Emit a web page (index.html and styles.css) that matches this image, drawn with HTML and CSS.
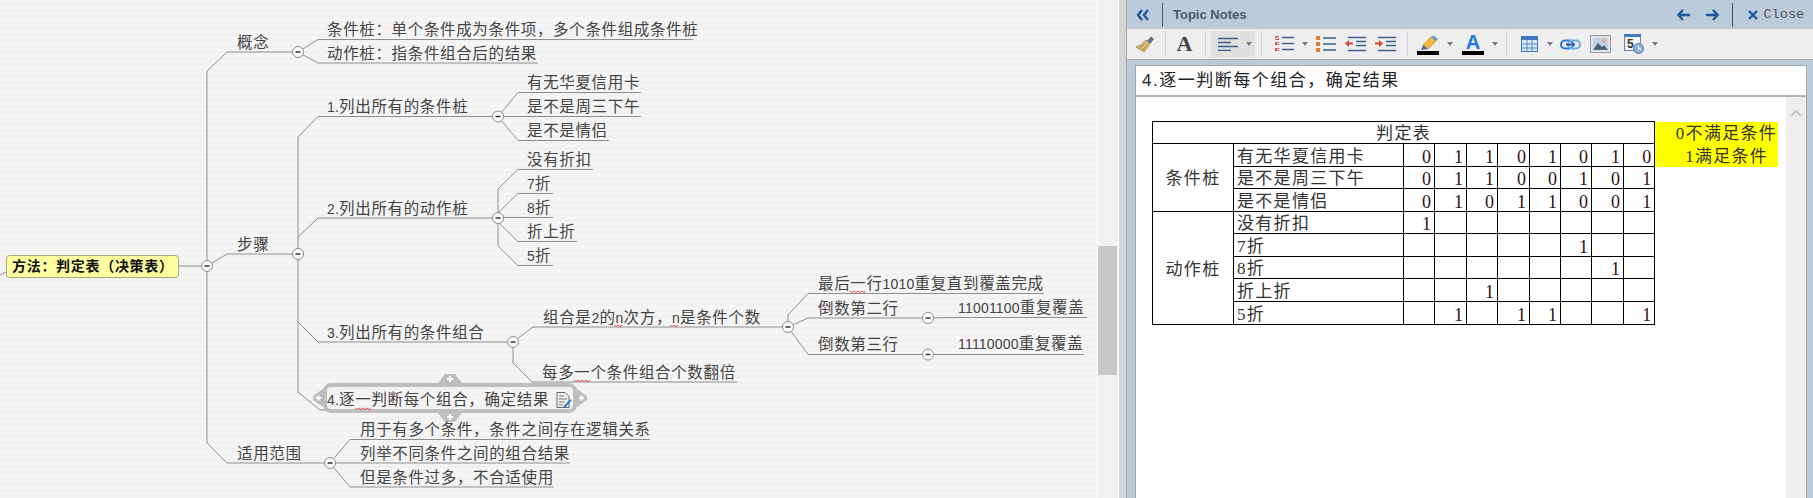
FILE: index.html
```html
<!DOCTYPE html>
<html lang="zh-CN">
<head>
  <meta charset="UTF-8">
  <title>Topic Notes</title>
  <link rel="stylesheet" href="styles.css">
</head>
<body>
  <div class="MainFrame">

    <div class="mapArea">
      <svg class="mapCanvas" width="1097" height="498" viewBox="0 0 1097 498">
        <!-- connecting lines -->
        <g class="links">
          <path d="M0 275L6 272M179 266H207M207 71V443"/>
          <path d="M207 71L227 52H298M298 52L318 39.5H693M298 52L318 63H538"/>
          <path d="M207 266L227 254H298M298 137V392"/>
          <path d="M298 137L318 116.5H498M498 116.5L518 92.5H641M498 116.5H641M498 116.5L518 140.5H609"/>
          <path d="M298 237L318 218H498M498 189V246M498 189L518 169.5H593M498 213L518 193.5H553M498 217.5H553M498 222L518 241.5H577M498 246L518 265.5H553"/>
          <path d="M298 322L318 342H513M513 342L533 327H788M513 342V363L532 382H737"/>
          <path d="M788 327V315L808 293.5H1044M788 327L808 318H928L957 317.5H1087M788 327L808 354.5H928H1084"/>
          <path d="M298 392L320 410H550"/>
          <path d="M207 443L227 463H330M330 463L350 439.5H650M330 463H570M330 463L350 487H554"/>
        </g>

        <!-- selected topic frame -->
        <g class="selectFrame">
          <rect class="selectBox" x="325" y="385" width="250" height="26" rx="6"/>
          <path class="selectHandle" d="M438 383L445 374H455L462 383Z"/>
          <path class="selectHandle" d="M438 413L445 422H455L462 413Z"/>
          <path class="selectHandle" d="M323 389L313 396V400L323 407Z"/>
          <path class="selectHandle" d="M577 389L587 396V400L577 407Z"/>
          <path class="handlePlus" d="M447 379H453M450 376V382M447 417H453M450 414V420M316 398H321M318.500 395.500V400.500M579 398H584M581.500 395.500V400.500"/>
        </g>

        <!-- collapse knobs -->
        <g class="knobs">
          <circle cx="207" cy="266" r="5.5"/>
          <circle cx="298" cy="52" r="5.5"/>
          <circle cx="298" cy="254" r="5.5"/>
          <circle cx="498" cy="116.5" r="5.5"/>
          <circle cx="498" cy="218" r="5.5"/>
          <circle cx="513" cy="342" r="5.5"/>
          <circle cx="788" cy="327" r="5.5"/>
          <circle cx="928" cy="318" r="5.5"/>
          <circle cx="928" cy="354.5" r="5.5"/>
          <circle cx="330" cy="463" r="5.5"/>
        </g>
        <path class="knobMinus" d="M204.500 266H209.500M295.500 52H300.500M295.500 254H300.500M495.500 116.500H500.500M495.500 218H500.500M510.500 342H515.500M785.500 327H790.500M925.500 318H930.500M925.500 354.500H930.500M327.500 463H332.500"/>

        <!-- root topic -->
        <rect class="rootBox" x="6.500" y="255.500" width="172" height="22" rx="3"/>
        <text class="rootText" x="12" y="271">方法：判定表（决策表）</text>

        <!-- topics -->
        <g class="topics">
          <text x="237" y="48">概念</text>
          <text x="327" y="35">条件桩：单个条件成为条件项，多个条件组成条件桩</text>
          <text x="327" y="59">动作桩：指条件组合后的结果</text>
          <text x="237" y="250">步骤</text>
          <text x="327" y="112"><tspan class="num">1.</tspan>列出所有的条件桩</text>
          <text x="527" y="88">有无华夏信用卡</text>
          <text x="527" y="112">是不是周三下午</text>
          <text x="527" y="136">是不是情侣</text>
          <text x="327" y="214"><tspan class="num">2.</tspan>列出所有的动作桩</text>
          <text x="527" y="165">没有折扣</text>
          <text x="527" y="189"><tspan class="num">7</tspan>折</text>
          <text x="527" y="213"><tspan class="num">8</tspan>折</text>
          <text x="527" y="237">折上折</text>
          <text x="527" y="261"><tspan class="num">5</tspan>折</text>
          <text x="327" y="338"><tspan class="num">3.</tspan>列出所有的条件组合</text>
          <text x="543" y="323">组合是<tspan class="num">2</tspan>的<tspan class="num">n</tspan>次方，<tspan class="num">n</tspan>是条件个数</text>
          <text x="542" y="378">每多一个条件组合个数翻倍</text>
          <text x="818" y="289">最后一行<tspan class="num">1010</tspan>重复直到覆盖完成</text>
          <text x="818" y="314">倒数第二行</text>
          <text x="958" y="313"><tspan class="num">11001100</tspan>重复覆盖</text>
          <text x="818" y="350">倒数第三行</text>
          <text x="958" y="349"><tspan class="num">11110000</tspan>重复覆盖</text>
          <text x="327" y="405"><tspan class="num">4.</tspan>逐一判断每个组合，确定结果</text>
          <text x="237" y="459">适用范围</text>
          <text x="360" y="435">用于有多个条件，条件之间存在逻辑关系</text>
          <text x="360" y="459">列举不同条件之间的组合结果</text>
          <text x="360" y="483">但是条件过多，不合适使用</text>
        </g>

        <!-- spell check marks -->
        <path class="squiggle" d="M355 408l2 1.500 2-1.500 2 1.500 2-1.500 2 1.500 2-1.500 2 1.500 2-1.500M574 380l2 1.500 2-1.500 2 1.500 2-1.500 2 1.500 2-1.500 2 1.500 2-1.500M850 291l2 1.500 2-1.500 2 1.500 2-1.500 2 1.500 2-1.500 2 1.500 2-1.500M614 325l2 1.500 2-1.500 2 1.500 2-1.500M670 325l2 1.500 2-1.500 2 1.500 2-1.500"/>

        <!-- note icon on selected topic -->
        <path class="noteIcon" d="M557 392.500H565L569 396.500V407.500H557Z"/>
        <path class="noteLines" d="M559 396H564M559 399H567M559 402H565M559 405H563"/>
        <path class="notePen" d="M564 407L571 400"/>
      </svg>
    </div>

    <div class="mapScroll"><div class="mapThumb"></div></div>
    <div class="splitter"></div>

    <div class="notesPanel">
      <div class="notesHead">
        <svg class="ico" width="14" height="12" viewBox="0 0 14 12"><path class="blueStroke" d="M6 1L2 6L6 11M12 1L8 6L12 11"/></svg>
        <span class="headSep"></span>
        <span class="headTitle">Topic Notes</span>
        <svg class="ico arrowLeft" width="14" height="12" viewBox="0 0 14 12"><path class="blueStroke" d="M6 1L1.500 6L6 11M2 6H13"/></svg>
        <svg class="ico arrowRight" width="14" height="12" viewBox="0 0 14 12"><path class="blueStroke" d="M8 1L12.500 6L8 11M1 6H12"/></svg>
        <span class="headSep sepRight"></span>
        <svg class="ico closeX" width="10" height="10" viewBox="0 0 10 10"><path class="blueStroke" d="M1 1L9 9M9 1L1 9"/></svg>
        <span class="closeText">Close</span>
      </div>

      <div class="toolBar">
        <svg class="ml8" width="20" height="18" viewBox="0 0 20 18">
          <path d="M12 6L16 1.500L19 4L15 9L12 8Z" fill="#5b7488"/>
          <path d="M11 5L15 9L9 17L1 12Q6 11 11 5Z" fill="#d8bd6a" stroke="#8a7a48" stroke-width=".7"/>
          <path d="M5 13L10 8M8 15L12 10" stroke="#a08a4c"/>
        </svg>
        <span class="barSep ml10"></span>
        <span class="bigA ml9">A</span>
        <span class="barSep ml11"></span>

        <div class="alignBtn ml5">
          <svg width="20" height="14" viewBox="0 0 20 14"><path class="navy" d="M0 1.500H20M0 5.500H13M0 9.500H20M0 13.500H13"/></svg>
          <i class="caret ml8"></i>
        </div>
        <span class="barSep ml6"></span>

        <svg class="ml13" width="19" height="16" viewBox="0 0 19 16">
          <path d="M0 0H4V1H2V2H4V4H0V3H3V2H0ZM0 6H4V7H2V8H4V9H0ZM0 12H4V13H2V14H4V15H0Z" fill="#d2603c"/>
          <path class="navy" d="M7 1.500H19M7 7.500H19M7 13.500H19"/>
        </svg>
        <i class="caret ml8"></i>
        <svg class="ml8" width="20" height="16" viewBox="0 0 20 16">
          <path d="M0 0H4V4H0ZM0 6H4V10H0ZM0 12H4V16H0Z" fill="#e07a30"/>
          <path class="navy" d="M7 2H20M7 8H20M7 14H20"/>
        </svg>
        <svg class="ml9" width="21" height="16" viewBox="0 0 21 16">
          <path class="navy" d="M3 1.500H21M11 5.500H21M11 9.500H21M3 14.500H21"/>
          <path d="M0 7.500L4 4V6.500H8V8.500H4V11Z" fill="#d8402c"/>
        </svg>
        <svg class="ml9" width="21" height="16" viewBox="0 0 21 16">
          <path class="navy" d="M3 1.500H21M11 5.500H21M11 9.500H21M3 14.500H21"/>
          <path d="M8 7.500L4 4V6.500H0V8.500H4V11Z" fill="#d8402c"/>
        </svg>
        <span class="barSep ml11"></span>

        <div class="colorBtn ml9">
          <svg width="22" height="15" viewBox="0 0 22 15">
            <path d="M14 1L19 5L11 13L6 9Z" fill="#f4b63c" stroke="#c88a20" stroke-width=".7"/>
            <path d="M14 1L16 -1L21 3L19 5Z" fill="#6a9ad0"/>
            <path d="M6 9L11 13L4 14Z" fill="#3a6ab0"/>
          </svg>
          <span class="colorBar"></span>
        </div>
        <i class="caret ml8"></i>
        <div class="colorBtn ml9">
          <span class="blueA">A</span>
          <span class="colorBar"></span>
        </div>
        <i class="caret ml8"></i>
        <span class="barSep ml8"></span>

        <svg class="ml14" width="17" height="16" viewBox="0 0 17 16">
          <rect x=".5" y=".5" width="16" height="15" fill="#dce8f6" stroke="#3f78c4"/>
          <path d="M0 0H17V4H0Z" fill="#3f78c4"/>
          <path d="M0 8H17M0 12H17M6 4V16M11 4V16" stroke="#4f88d4"/>
        </svg>
        <i class="caret ml9"></i>
        <svg class="ml7" width="21" height="11" viewBox="0 0 21 11">
          <rect x="1" y="1.500" width="12" height="8" rx="4" fill="none" stroke="#2f78d0" stroke-width="2"/>
          <rect x="8" y="1.500" width="12" height="8" rx="4" fill="none" stroke="#6aa8e8" stroke-width="2"/>
          <path d="M6 5.500H15" stroke="#1f5aa8" stroke-width="2"/>
        </svg>
        <svg class="ml9" width="21" height="18" viewBox="0 0 21 18">
          <rect x=".5" y=".5" width="20" height="17" fill="#e4e4e4" stroke="#9a9a9a"/>
          <rect x="3" y="3" width="15" height="12" fill="#bcd4ee"/>
          <circle cx="13.500" cy="6" r="2" fill="#f0a878"/>
          <path d="M3 15L8 8L12 12L14 10L18 15Z" fill="#506478"/>
        </svg>
        <svg class="ml13" width="20" height="20" viewBox="0 0 20 20">
          <rect x=".5" y=".5" width="16" height="16" fill="#f4f4f4" stroke="#6a8ab8"/>
          <path d="M0 0H17V3H0Z" fill="#3f78c4"/>
          <text class="dateNum" x="3" y="14">5</text>
          <circle cx="14.500" cy="14.500" r="5" fill="#8fb2d8" stroke="#5078a8"/>
          <path d="M14.500 11.500V15H17" fill="none" stroke="#fff"/>
        </svg>
        <i class="caret ml8"></i>
      </div>

      <div class="noteBody">
        <div class="noteTitle">4.逐一判断每个组合，确定结果</div>
        <div class="noteMain">
          <div class="noteContent">
            <table class="judgeTable">
              <colgroup>
                <col class="cLabel"><col class="cName"><col class="cA"><col class="cB"><col class="cA"><col class="cB"><col class="cA"><col class="cA"><col class="cB"><col class="cA"><col class="cSide">
              </colgroup>
              <tr class="rowA">
                <td colspan="10" class="center">判定表</td>
                <td class="side right">0不满足条件</td>
              </tr>
              <tr class="rowB">
                <td rowspan="3" class="center">条件桩</td>
                <td>有无华夏信用卡</td>
                <td class="val">0</td><td class="val">1</td><td class="val">1</td><td class="val">0</td><td class="val">1</td><td class="val">0</td><td class="val">1</td><td class="val">0</td>
                <td class="side right second">1满足条件</td>
              </tr>
              <tr class="rowA">
                <td>是不是周三下午</td>
                <td class="val">0</td><td class="val">1</td><td class="val">1</td><td class="val">0</td><td class="val">0</td><td class="val">1</td><td class="val">0</td><td class="val">1</td>
              </tr>
              <tr class="rowB">
                <td>是不是情侣</td>
                <td class="val">0</td><td class="val">1</td><td class="val">0</td><td class="val">1</td><td class="val">1</td><td class="val">0</td><td class="val">0</td><td class="val">1</td>
              </tr>
              <tr class="rowA">
                <td rowspan="5" class="center">动作桩</td>
                <td>没有折扣</td>
                <td class="val">1</td><td></td><td></td><td></td><td></td><td></td><td></td><td></td>
              </tr>
              <tr class="rowB">
                <td>7折</td>
                <td></td><td></td><td></td><td></td><td></td><td class="val">1</td><td></td><td></td>
              </tr>
              <tr class="rowA">
                <td>8折</td>
                <td></td><td></td><td></td><td></td><td></td><td></td><td class="val">1</td><td></td>
              </tr>
              <tr class="rowB">
                <td>折上折</td>
                <td></td><td></td><td class="val">1</td><td></td><td></td><td></td><td></td><td></td>
              </tr>
              <tr class="rowB">
                <td>5折</td>
                <td></td><td class="val">1</td><td></td><td class="val">1</td><td class="val">1</td><td></td><td></td><td class="val">1</td>
              </tr>
            </table>
          </div>
          <div class="noteScroll">
            <svg width="12" height="7" viewBox="0 0 12 7"><path d="M1 6L6 1L11 6" fill="none" stroke="#c4c4c4" stroke-width="2"/></svg>
          </div>
        </div>
      </div>
    </div>

  </div>
</body>
</html>
```

FILE: styles.css
```css
html, body {
  margin: 0;
  padding: 0;
  height: 498px;
  overflow: hidden;
  background: #fff;
}

.MainFrame {
  display: flex;
  width: 1813px;
  height: 498px;
  font-family: "Liberation Serif", "Noto Sans CJK SC", serif;
}

/* mind map */
.mapArea {
  width: 1097px;
  height: 498px;
  background: repeating-linear-gradient(#f5f5f5 0 3px, #f2f2f2 3px 6px);
}

.mapCanvas {
  display: block;
}

.links {
  fill: none;
  stroke: #8e8e8e;
  stroke-width: 1;
}

.knobs circle {
  fill: #fbfbfb;
  stroke: #8e8e8e;
}

.knobMinus {
  fill: none;
  stroke: #333;
  stroke-width: 1.4;
}

.rootBox {
  fill: #ffffa2;
  stroke: #a8a878;
}

.rootText {
  font: bold 14px "Noto Sans CJK SC", sans-serif;
  letter-spacing: .7px;
  fill: #111;
}

.topics text {
  font: 15.5px "Liberation Sans", "Noto Sans CJK SC", sans-serif;
  letter-spacing: .65px;
  fill: #444;
}

.topics .num {
  font-size: 14px;
  letter-spacing: .2px;
}

.squiggle {
  fill: none;
  stroke: #e0302c;
  stroke-width: .8;
}

.selectBox {
  fill: none;
  stroke: #bebebe;
  stroke-width: 4;
}

.selectHandle {
  fill: #bebebe;
}

.handlePlus {
  fill: none;
  stroke: #fff;
  stroke-width: 2;
}

.noteIcon {
  fill: #f2f2f2;
  stroke: #666;
}

.noteLines {
  fill: none;
  stroke: #777;
}

.notePen {
  fill: none;
  stroke: #2f78d0;
  stroke-width: 2;
}

/* strips between map and notes */
.mapScroll {
  width: 22px;
  height: 498px;
  background: #f0f0f0;
  border-left: 1px solid #fff;
  border-right: 1px solid #fff;
  box-sizing: border-box;
}

.mapThumb {
  width: 19px;
  height: 129px;
  margin-top: 246px;
  background: #c8c8c8;
}

.splitter {
  width: 8px;
  height: 498px;
  background: #d4d4d4;
  border-right: 1px solid #a8a8a8;
  box-sizing: border-box;
}

/* notes panel */
.notesPanel {
  flex: 1;
  display: flex;
  flex-direction: column;
  height: 498px;
  background: #bccbda;
}

.notesHead {
  display: flex;
  align-items: center;
  height: 29px;
  padding-left: 9px;
  color: #555;
}

.headSep {
  width: 1px;
  height: 24px;
  margin-left: 12px;
  background: #555;
}

.headTitle {
  margin-left: 10px;
  font: bold 13px "Liberation Sans", sans-serif;
  color: #4c5a68;
}

.arrowLeft {
  margin-left: 431px;
}

.arrowRight {
  margin-left: 14px;
}

.sepRight {
  margin-left: 13px;
}

.closeX {
  margin-left: 15px;
}

.closeText {
  margin-left: 5px;
  font: 13.6px "Liberation Mono", monospace;
  color: #555;
}

.blueStroke {
  fill: none;
  stroke: #1d5aa0;
  stroke-width: 2.4;
}

.toolBar {
  display: flex;
  align-items: center;
  height: 30px;
  background: #eee;
  border-bottom: 1px solid #a8a8a8;
}

.toolBar svg {
  flex: none;
}

.ml5 { margin-left: 5px; }
.ml6 { margin-left: 6px; }
.ml7 { margin-left: 7px; }
.ml8 { margin-left: 8px; }
.ml9 { margin-left: 9px; }
.ml10 { margin-left: 10px; }
.ml11 { margin-left: 11px; }
.ml13 { margin-left: 13px; }
.ml14 { margin-left: 14px; }

.barSep {
  width: 1px;
  height: 26px;
  background: #d4d4d4;
}

.bigA {
  width: 19px;
  font: bold 22px "Liberation Serif", serif;
  text-align: center;
  color: #444;
}

.alignBtn {
  display: flex;
  align-items: center;
  width: 37px;
  height: 26px;
  padding-left: 7px;
  background: #e0e0e0;
}

.navy {
  fill: none;
  stroke: #3a5f8c;
  stroke-width: 1.6;
}

.caret {
  display: block;
  width: 0;
  height: 0;
  border-top: 4px solid #7c7c7c;
  border-left: 3.5px solid transparent;
  border-right: 3.5px solid transparent;
}

.colorBtn {
  display: flex;
  flex-direction: column;
  align-items: center;
  width: 22px;
  height: 21px;
  justify-content: flex-end;
}

.colorBar {
  display: block;
  width: 22px;
  height: 4px;
  background: #000;
}

.blueA {
  font: bold 20px/17px "Liberation Sans", sans-serif;
  color: #1a78e0;
}

.dateNum {
  font: bold 12px "Liberation Sans", sans-serif;
  fill: #333;
}

.noteBody {
  flex: 1;
  display: flex;
  flex-direction: column;
  margin: 5px 6px 0 8px;
  min-height: 0;
  border-left: 1px solid #a8a8a8;
  border-right: 1px solid #a8a8a8;
  background: #fff;
}

.noteTitle {
  height: 29px;
  padding-left: 6px;
  border-top: 1px solid #a8a8a8;
  border-bottom: 2px solid #b4b4b4;
  font: 17px/29px "Liberation Sans", "Noto Sans CJK SC", sans-serif;
  letter-spacing: 1.5px;
  color: #222;
}

.noteMain {
  flex: 1;
  display: flex;
  min-height: 0;
}

.noteContent {
  flex: 1;
  padding: 24px 0 0 16px;
}

.noteScroll {
  width: 20px;
  padding-top: 6px;
  background: #eee;
  text-align: center;
}

/* decision table */
.judgeTable {
  border-collapse: collapse;
  table-layout: fixed;
  width: 627px;
  font-size: 17px;
  letter-spacing: 1.3px;
  color: #333;
}

.judgeTable td {
  padding: 3px 0 0 3px;
  border: 1px solid #000;
  line-height: 18px;
  white-space: nowrap;
  overflow: hidden;
}

.rowA { height: 22px; }
.rowB { height: 23px; }

.cLabel { width: 81px; }
.cName { width: 170px; }
.cA { width: 31px; }
.cB { width: 32px; }
.cSide { width: 124px; }

.judgeTable td.center { text-align: center; padding: 3px 0 0; }
.judgeTable td.val { text-align: right; padding: 3px 3px 0 0; font-size: 18px; letter-spacing: 0; color: #301018; }

.judgeTable td.side {
  border: none;
  background: #ff0;
  color: #333;
}

.judgeTable td.right {
  text-align: right;
  padding: 3px 1px 0 0;
}

.judgeTable td.second {
  padding-right: 10px;
}
```
